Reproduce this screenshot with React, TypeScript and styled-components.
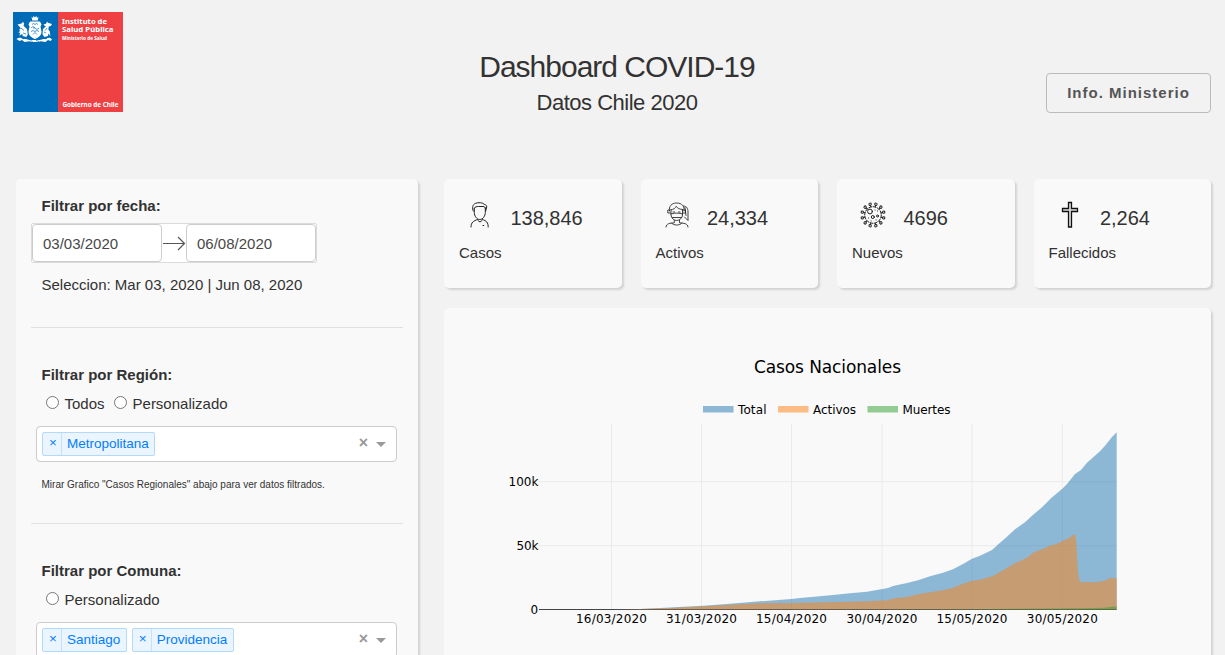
import React from "react";
import styled, { createGlobalStyle } from "styled-components";

const GlobalStyle = createGlobalStyle`
  * { box-sizing: border-box; }
  body {
    margin: 0;
    background: #f2f2f2;
    color: #323232;
    font: 15px/24px "Liberation Sans", Arial, sans-serif;
  }
`;

const Page = styled.div`
  height: 655px;
  overflow: hidden;
  display: flex;
  flex-direction: column;
`;

const Header = styled.header`
  flex: none;
  height: 179px;
  display: grid;
  grid-template-columns: 325px 1fr 315px;
  align-items: start;
  padding: 12px 14px 0 13px;
`;

const Logo = styled.svg`
  display: block;
  width: 110px;
  height: 100px;
`;

const Titles = styled.div`
  text-align: center;
  padding-top: 37px;
`;

const Title = styled.h3`
  margin: 0;
  font-weight: 400;
  font-size: 30px;
  line-height: 36px;
  letter-spacing: -1px;
`;

const Subtitle = styled.h5`
  margin: 0;
  font-weight: 400;
  font-size: 22px;
  line-height: 36px;
  letter-spacing: -0.5px;
`;

const InfoButton = styled.button`
  justify-self: end;
  margin-top: 61px;
  width: 165px;
  height: 40px;
  padding: 0;
  border: 1px solid #bbb;
  border-radius: 4px;
  background: transparent;
  color: #555;
  font: 700 15px/38px "Liberation Sans", Arial, sans-serif;
  letter-spacing: 1px;
`;

const Main = styled.main`
  flex: 1;
  min-height: 0;
  display: flex;
  gap: 26px;
  padding: 0 14px 0 16px;
`;

const Card = styled.section`
  background: #f9f9f9;
  border-radius: 5px;
  box-shadow: 2px 2px 2px lightgrey;
`;

const Sidebar = styled(Card)`
  width: 402px;
  height: 700px;
  flex: none;
  padding: 15px 15px 0;
`;

const FilterTitle = styled.div`
  font-weight: 700;
  padding-left: 10.5px;
  height: 24px;
`;

const Divider = styled.hr`
  margin: 30px 0 35px;
  border: 0;
  border-top: 1px solid #e1e1e1;
`;

const DateRange = styled.div`
  display: flex;
  align-items: center;
  width: 286px;
  height: 40px;
  margin: 5px 0 10px;
  border: 1px solid #dbdbdb;
  border-radius: 2px;
  background: #fff;
`;

const DateInput = styled.div`
  width: 130px;
  height: 38px;
  padding-left: 10px;
  border: 1px solid #ccc;
  border-radius: 4px;
  color: #484848;
  line-height: 37px;
`;

const Arrow = styled.svg`
  width: 24px;
  height: 24px;
  fill: none;
  stroke: #555;
  stroke-width: 1.2;
`;

const Selection = styled.div`
  padding-left: 10.5px;
`;

const Radios = styled.div`
  display: flex;
  gap: 9.5px;
  height: 24px;
  margin: 5px 0 10px 15px;
`;

const RadioLabel = styled.label`
  display: flex;
  align-items: flex-start;
  gap: 5.5px;

  input {
    width: 13px;
    height: 13px;
    margin: 4px 0 0;
  }
`;

const SelectBox = styled.div`
  display: flex;
  align-items: center;
  width: 361px;
  height: 36px;
  margin-left: 5px;
  padding: 0 10px 0 5px;
  border: 1px solid #ccc;
  border-radius: 4px;
  background: #fff;
`;

const Chip = styled.span`
  display: flex;
  height: 24px;
  margin: 0 5px 1px 0;
  border: 1px solid #b3d9ff;
  border-radius: 2px;
  background: #ebf5ff;
  color: #007eff;
  font-size: 13.5px;
  line-height: 21px;
`;

const ChipRemove = styled.span`
  width: 19px;
  padding-left: 6px;
  border-right: 1px solid #c2e0ff;
  line-height: 19px;
`;

const ChipText = styled.span`
  padding: 0 5.4px 0 5px;
`;

const SelectControls = styled.span`
  display: flex;
  align-items: center;
  gap: 8px;
  margin-left: auto;
  color: #999;
  font-size: 16px;
  font-weight: 700;

  span {
    line-height: 20px;
    padding-bottom: 2px;
  }
`;

const Caret = styled.i`
  border: 5px solid transparent;
  border-top-color: #999;
  border-bottom-width: 0;
`;

const Note = styled.div`
  margin-top: 11px;
  padding-left: 10.5px;
  font-size: 10px;
  height: 20px;
`;

const Content = styled.div`
  flex: 1;
  min-width: 0;
`;

const Stats = styled.div`
  display: grid;
  grid-template-columns: repeat(4, 1fr);
  gap: 19px;
  height: 109px;
`;

const StatCard = styled(Card)`
  padding: 15px;
`;

const StatTop = styled.div`
  display: flex;
  height: 47px;
`;

const StatIcon = styled.svg`
  width: 40px;
  height: 40px;
  margin-left: 1px;
  fill: none;
  stroke: #222;
  stroke-linecap: round;
  stroke-linejoin: round;
`;

const StatValue = styled.div`
  padding: 12px 0 0 10.4px;
  font-size: 20px;
`;

const ChartCard = styled(Card)`
  margin-top: 20px;
  height: 400px;
`;

const ChartSvg = styled.svg`
  display: block;
  width: 767px;
  height: 347px;
  font: 12px "DejaVu Sans", Verdana, sans-serif;
  fill: #000;
`;

const Emblem = () => (
  <g fill="#fff">
    <path d="M18.500 4.500l1.200 1.500 1-2 1.300 1.500 1.300-1.500 1 2 1.200-1.500-.7 4h-5.600z" />
    <path d="M17 9.500h10l1.500 3-1 2 1 5c0 4-3 6-6.500 7.500-3.500-1.500-6.500-3.500-6.500-7.500l1-5-1-2z" />
    <path d="M4.500 12.500l4-1 1.500-1.800 1.200 2-.7 2 3.500 3.300.8 5.500-1.500 2.500-3.500-1-.5-2-3 1.500 1-3-2 .5 2-2.500-1.500-.5 2-1.500-1-1.500z" />
    <path d="M39 12l-3.500-1-1.500-1.300-1 2-2.500.8 1 1.300 1.500.5-3 2.800-.5 5.400 2 2.500 3.500-1 .3-2.500 2 2.500-.5-4.500-1.500-2 .5-3 2-.5z" />
    <path d="M3.500 27c2.500-2 5-1.500 6.500.3 2.500-1 4.500 0 6.500.7h10c2.500-.7 4.500-1.700 6.500-.7 2-2 4.500-2 6 .2l-1.500 1.500-2.500-1-2.500 2-5-.8-2 .8h-7l-2-.8-5 .8-2.500-2-2.500 1z" />
    <g stroke="#006cb7" fill="none" strokeWidth=".7">
      <path d="M19 12.500l1.500-1 1.500 1 1.500-1 1.500 1M18 16c2-2 3-1.500 4 0s2.500 2 4 0M18 19.500l2-1 2 1 2-1 2 1M20 22.500l2-2 2 2M8 16l3 2.500M34 16l-2 2.500M10 21l3 1M31 20l2 1M21 15v2M17.500 28.500l2 1M23 28.500l3 1" />
    </g>
  </g>
);

const ISPLogo = () => (
  <Logo viewBox="0 0 110 100" fontFamily="Noto Sans, Open Sans, sans-serif" fontWeight="700" fill="#fff">
    <rect width="45" height="100" fill="#006cb7" />
    <rect x="45" width="65" height="100" fill="#ef4144" />
    <Emblem />
    <text x="49" y="11.800" fontSize="7.800" textLength="45" lengthAdjust="spacingAndGlyphs">Instituto de</text>
    <text x="49" y="20" fontSize="7.800" textLength="51.500" lengthAdjust="spacingAndGlyphs">Salud Pública</text>
    <text x="49" y="27.500" fontSize="4.900" textLength="45" lengthAdjust="spacingAndGlyphs">Ministerio de Salud</text>
    <text x="49.500" y="95" fontSize="6.500" textLength="56" lengthAdjust="spacingAndGlyphs">Gobierno de Chile</text>
  </Logo>
);

const ManIcon = () => (
  <StatIcon viewBox="0 0 40 40">
    <path d="M13.300 17c-1.600-3-.6-6.500 2-7.600 3-1.200 7.500-1 9 1 1.800.4 2.600 1.300 2.400 2.600l-1 4" />
    <path d="M14.200 14.300c1-1.300 2.300-2 4.300-1.800h4.500c1.500 0 2.200.8 2.400 1.900M14.300 14v4.500c0 3.500 2.500 7 5.500 7s5.500-3.500 5.500-7V14" />
    <path d="M17.500 25.500c-4 1.500-6.500 2.700-6.500 7.500M22.500 25.500c4 1.500 5.700 2.700 5.700 7.500M18 26.500l2 1.500 2-1.500M23 31.500h.8" />
  </StatIcon>
);

const NurseIcon = () => (
  <StatIcon viewBox="0 0 40 40" strokeWidth=".85">
    <path d="M12.500 17c-1-4.500 2-8 7.200-8s8.300 3.500 7.300 8M14 15.800c2.700-.3 4.500-1.800 5.200-3.500 1.300 2 3.300 3 6.300 3.200M14 15.500V21c0 3 3 5.500 5.700 5.500s5.800-2.500 5.800-5.500v-5.500M26.500 12c3.300 0 4.500 2.500 4.500 6v8.500l-3.500-3.500M28 13.500l1 8" />
    <path d="M12.500 16h-1.700v3h2.500M26 16h2.500v3H26M14 20l3.500-.8h4.500l3.500.8M15.500 23.500h8.500M16 18h1.600M21.500 18h1.600M17.300 26.500v2.300c-4 .5-8.300.5-8.300 4.200M22.500 26.500v2.300c4 .5 8.500.5 8.500 4.200M14.500 29c1.800 2.800 8.500 2.800 10.500 0" />
  </StatIcon>
);

const VIRUS_SPIKES = Array.from({ length: 12 }, (_, i) => i * 30);

const VirusIcon = () => (
  <StatIcon viewBox="0 0 40 40">
    <circle cx="20" cy="21" r="8.300" strokeDasharray="2.900 1.445" />
    {VIRUS_SPIKES.map((angle) => (
      <g key={angle} transform={`rotate(${angle + 15} 20 21)`}>
        <path d="M20 12.500v-1.500" />
        <circle cx="20" cy="9.900" r="1.200" />
      </g>
    ))}
    <circle cx="17" cy="17.500" r="2.400" />
    <circle cx="19.800" cy="23" r="1.500" />
    <circle cx="24.500" cy="22" r="1" />
    <path d="M22 16h.1M24.500 17h.1M15.500 24h.1M18 27h.1M23 26h.1" />
  </StatIcon>
);

const CrossIcon = () => (
  <StatIcon viewBox="0 0 40 40">
    <path
      d="M18.500 8.500h3v6h6v3h-6v15.500h-3v-15.500h-6v-3h6z"
      fill="#ddd"
      stroke="#111"
      strokeWidth="1.300"
      strokeLinejoin="miter"
    />
  </StatIcon>
);

const STATS = [
  { value: "138,846", label: "Casos", Icon: ManIcon },
  { value: "24,334", label: "Activos", Icon: NurseIcon },
  { value: "4696", label: "Nuevos", Icon: VirusIcon },
  { value: "2,264", label: "Fallecidos", Icon: CrossIcon },
];

const X_TICKS: [number, string][] = [
  [611.5, "16/03/2020"],
  [701.5, "31/03/2020"],
  [791.5, "15/04/2020"],
  [882, "30/04/2020"],
  [972, "15/05/2020"],
  [1062.3, "30/05/2020"],
];

const Y_TICKS: [number, string, number][] = [
  [481.7, "100k", 30],
  [545.7, "50k", 22],
  [609.5, "0", 8],
];

const LEGEND = [
  { x: 703, label: "Total", width: 28.5, color: "#1f77b4" },
  { x: 778, label: "Activos", width: 43, color: "#ff7f0e" },
  { x: 867.5, label: "Muertes", width: 48, color: "#2ca02c" },
];

const AREAS = [
  {
    color: "#1f77b4",
    points:
      "539,609.5 603,609.5 640,608.9 670,607.6 703,605.8 730,603.8 760,601.3 791.5,599 800,597.9 817,596.5 833,595 850,593.300 867,591.700 877,590 888,588 893,586 907,583 918,580.300 930,576.300 943,572.700 953,569.300 963,564 972,558.800 980,555.700 992,550 1000,542.700 1007,536.700 1015,529.300 1025,522.300 1032,515.700 1042,507.300 1051,498.300 1062,489 1067,484 1075,474 1081,470 1087,462.700 1100,451.300 1105,445.700 1112,437 1116.700,432.300",
  },
  {
    color: "#ff7f0e",
    points:
      "539,609.5 613,609.4 640,609 670,607.9 703,606.2 730,604.7 760,603.3 791.5,603 800,602.7 840,602 867,601.300 887,600.300 895,598.300 907,597 918,594.300 930,592.300 943,590.300 953,587.700 963,583.700 972,580.700 980,579.700 993,576 1000,572 1015,563.300 1027,557.700 1033,552.700 1042,549.300 1051,545.300 1056,544.300 1063,540.700 1069,538.300 1073,534.500 1075,534.700 1076,540 1077,555 1078,572 1079,578.500 1080.500,582.200 1087,582 1095,582.300 1104,581 1110,578.300 1116.700,577.900",
  },
  {
    color: "#2ca02c",
    points: "539,609.5 960,609.300 1020,608.800 1080,608.200 1105,607.800 1109,607.100 1116.700,606.600",
  },
];

const CasesChart = () => (
  <ChartSvg viewBox="444 308 767 347">
    <text x="754" y="373" fontSize="17" textLength="147">Casos Nacionales</text>
    {LEGEND.map((l) => (
      <g key={l.label}>
        <rect x={l.x} y="406" width="30.500" height="6.500" fill={l.color} fillOpacity=".5" />
        <text x={l.x + 35} y="414" textLength={l.width}>{l.label}</text>
      </g>
    ))}
    {X_TICKS.map(([x, label]) => (
      <g key={label}>
        <path d={`M${x} 423.500V609`} stroke="#eaeaea" />
        <text x={x - 35.5} y="623" textLength="71">{label}</text>
      </g>
    ))}
    {Y_TICKS.map(([y, label, width]) => (
      <g key={label}>
        {label !== "0" && <path d={`M539 ${y}H1116.500`} stroke="#eaeaea" />}
        <text x={538.5 - width} y={y + 4.5} textLength={width}>{label}</text>
      </g>
    ))}
    <path d="M539 609.500H1116.500" stroke="#444" />
    {AREAS.map((a) => (
      <polygon key={a.color} points={`${a.points} 1116.700,609.500`} fill={a.color} fillOpacity=".5" />
    ))}
  </ChartSvg>
);

const Select = ({ items }: { items: string[] }) => (
  <SelectBox>
    {items.map((item) => (
      <Chip key={item}>
        <ChipRemove>×</ChipRemove>
        <ChipText>{item}</ChipText>
      </Chip>
    ))}
    <SelectControls>
      <span>×</span>
      <Caret />
    </SelectControls>
  </SelectBox>
);

const RadioGroup = ({ name, options }: { name: string; options: string[] }) => (
  <Radios>
    {options.map((option) => (
      <RadioLabel key={option}>
        <input type="radio" name={name} />
        {option}
      </RadioLabel>
    ))}
  </Radios>
);

export default function App() {
  return (
    <Page>
      <GlobalStyle />
      <Header>
        <ISPLogo />
        <Titles>
          <Title>Dashboard COVID-19</Title>
          <Subtitle>Datos Chile 2020</Subtitle>
        </Titles>
        <InfoButton>Info. Ministerio</InfoButton>
      </Header>
      <Main>
        <Sidebar>
          <FilterTitle>Filtrar por fecha:</FilterTitle>
          <DateRange>
            <DateInput>03/03/2020</DateInput>
            <Arrow viewBox="0 0 24 24">
              <path d="M1 12.500h21.500M16 6l6.500 6.500L16 19" />
            </Arrow>
            <DateInput>06/08/2020</DateInput>
          </DateRange>
          <Selection>Seleccion: Mar 03, 2020 | Jun 08, 2020</Selection>
          <Divider />
          <FilterTitle>Filtrar por Región:</FilterTitle>
          <RadioGroup name="region" options={["Todos", "Personalizado"]} />
          <Select items={["Metropolitana"]} />
          <Note>Mirar Grafico "Casos Regionales" abajo para ver datos filtrados.</Note>
          <Divider />
          <FilterTitle>Filtrar por Comuna:</FilterTitle>
          <RadioGroup name="comuna" options={["Personalizado"]} />
          <Select items={["Santiago", "Providencia"]} />
        </Sidebar>
        <Content>
          <Stats>
            {STATS.map(({ value, label, Icon }) => (
              <StatCard key={label}>
                <StatTop>
                  <Icon />
                  <StatValue>{value}</StatValue>
                </StatTop>
                {label}
              </StatCard>
            ))}
          </Stats>
          <ChartCard>
            <CasesChart />
          </ChartCard>
        </Content>
      </Main>
    </Page>
  );
}
